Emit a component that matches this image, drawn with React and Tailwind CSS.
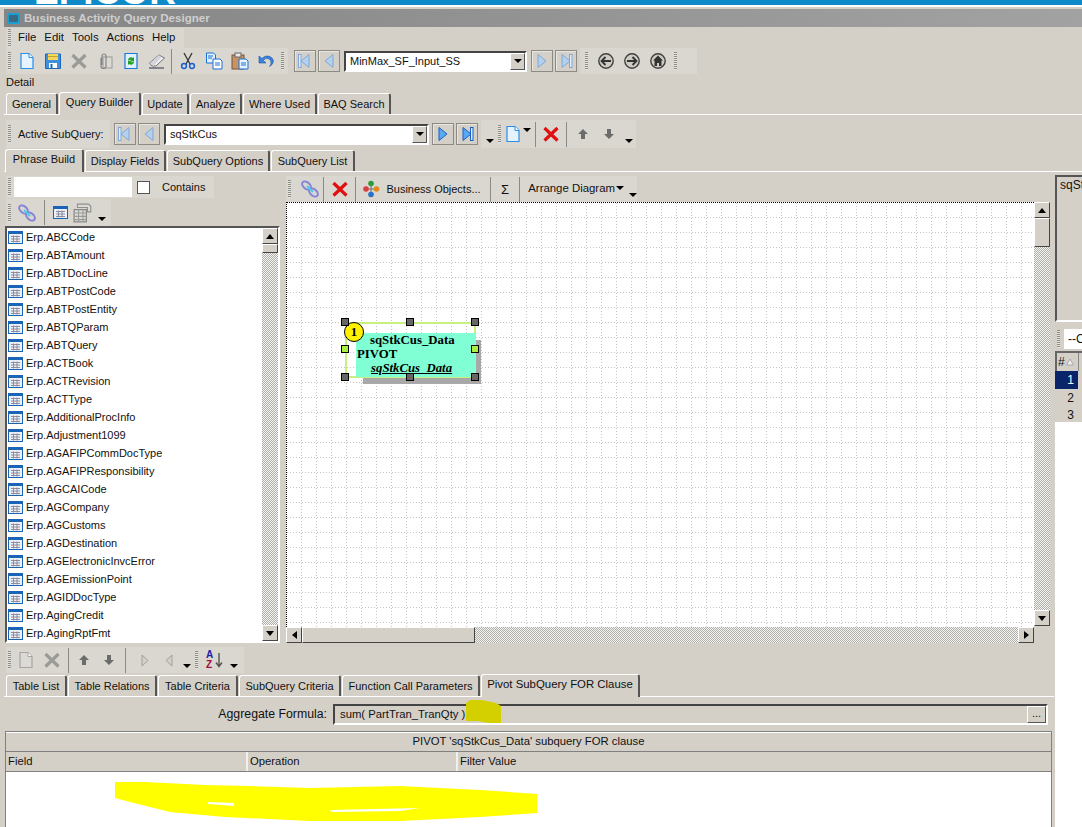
import React from "react";

const tables = ["ABCCode","ABTAmount","ABTDocLine","ABTPostCode","ABTPostEntity","ABTQParam","ABTQuery","ACTBook","ACTRevision","ACTType","AdditionalProcInfo","Adjustment1099","AGAFIPCommDocType","AGAFIPResponsibility","AGCAICode","AGCompany","AGCustoms","AGDestination","AGElectronicInvcError","AGEmissionPoint","AGIDDocType","AgingCredit","AgingRptFmt"];

const Svg = ({ children, size = 18 }) => (
  <svg width={size} height={size} viewBox="0 0 18 18" className="shrink-0">{children}</svg>
);

const DocIcon = ({ gray }) => (
  <Svg>
    <path d="M3 1.500h8l4 4v11H3z" fill={gray ? "#dcdad4" : "#e4f3ff"} stroke={gray ? "#a5a5a5" : "#2b8fe8"} strokeWidth="1.200" />
    <path d="M11 1.500v4h4" fill="#fff" stroke={gray ? "#a5a5a5" : "#2b8fe8"} />
  </Svg>
);
const SaveIcon = () => (
  <Svg>
    <path d="M1.500 2h15v14.500h-15z" fill="#3f8fdc" stroke="#1c66b8" />
    <rect x="4" y="2" width="10" height="6" fill="#f5d75a" />
    <rect x="4" y="4" width="10" height="1" fill="#c8a02c" />
    <rect x="5" y="11" width="8" height="5" fill="#fff" />
    <rect x="6.500" y="12" width="2" height="4" fill="#1c66b8" />
  </Svg>
);
const RedX = ({ gray }) => (
  <Svg>
    <path d="M2.500 3 15.500 15.500M15.500 3 2.500 15.500" stroke={gray ? "#9a9a96" : "#e01010"} strokeWidth="3.200" />
  </Svg>
);
const ClipIcon = () => (
  <Svg>
    <rect x="7" y="5" width="9" height="11" fill="#dcdad4" stroke="#9a9a9a" />
    <path d="M5 6v8a2.500 2.500 0 0 0 5 0V4a2 2 0 0 0-4 0v9" fill="none" stroke="#858585" strokeWidth="1.200" />
  </Svg>
);
const RefreshIcon = () => (
  <Svg>
    <path d="M3 1.500h12v15H3z" fill="#dff1ff" stroke="#1a7ad8" strokeWidth="1.200" />
    <path d="M6 8a3 3 0 0 1 5-2l1-1v4H8l1-1a1.500 1.500 0 0 0-2 1zM12 10a3 3 0 0 1-5 2l-1 1V9h4l-1 1a1.500 1.500 0 0 0 2-1z" fill="#25a025" />
  </Svg>
);
const EraserIcon = () => (
  <Svg>
    <path d="M1.500 11 11 3l5.500 3-8.500 8H4z" fill="#eeeeee" stroke="#70707c" />
    <path d="M2 11l3 3 8-8-2-3z" fill="#d4d4da" />
    <path d="M1 16h15" stroke="#303048" />
  </Svg>
);
const ScissorsIcon = () => (
  <Svg>
    <path d="M5 1l6 11M13 1 7 12" stroke="#333" strokeWidth="1.300" />
    <circle cx="5" cy="14" r="2.400" fill="none" stroke="#1a5fd0" strokeWidth="1.500" />
    <circle cx="13" cy="14" r="2.400" fill="none" stroke="#1a5fd0" strokeWidth="1.500" />
  </Svg>
);
const CopyIcon = () => (
  <Svg>
    <path d="M1.500 1h7l2 2v8h-9z" fill="#dff1ff" stroke="#1a6fd0" />
    <path d="M8 7h7l2 2v8H8z" fill="#fff" stroke="#1a6fd0" />
    <path d="M3 4h5M3 6h4M10 11h5M10 13h5" stroke="#1a6fd0" />
  </Svg>
);
const PasteIcon = () => (
  <Svg>
    <rect x="1" y="3" width="12" height="14" fill="#c79468" stroke="#7c5330" />
    <rect x="4" y="1" width="6" height="4" fill="#e8e8e8" stroke="#666" />
    <path d="M8 7h7l2 2v8H8z" fill="#e4f3ff" stroke="#1a6fd0" />
    <path d="M10 11h5M10 13h5" stroke="#1a6fd0" />
  </Svg>
);
const UndoIcon = () => (
  <Svg>
    <path d="M2 4v7h7L6.500 8.500A4 4 0 0 1 14 10a5 5 0 0 1-1.500 4.500A7 7 0 0 0 16.500 9 6.500 6.500 0 0 0 5 6.500z" fill="#3c82dc" stroke="#1c56a8" strokeWidth=".6" />
  </Svg>
);
const NavIcon = ({ dir, bar, on }) => {
  const stroke = on ? "#1a60c0" : "#7fa8d8";
  const fill = on ? "#58a8f4" : "#b4d0ec";
  return (
    <svg width="14" height="16" viewBox="0 0 14 16">
      <path d={dir === "l" ? "M11 1.500v13L3 8z" : "M3 1.500v13L11 8z"} fill={fill} stroke={stroke} />
      {bar && <rect x={dir === "l" ? 0.500 : 10.500} y="1.500" width="2.500" height="13" fill="#e0ecf8" stroke={stroke} />}
    </svg>
  );
};
const CircleIcon = ({ kind }) => (
  <Svg>
    <circle cx="9" cy="9" r="7.200" fill="#cfccc4" stroke="#404040" strokeWidth="1.400" />
    {kind === "back" && <path d="M14 9H5M8.500 5 4.500 9l4 4" fill="none" stroke="#333" strokeWidth="1.800" />}
    {kind === "fwd" && <path d="M4 9h9M9.500 5l4 4-4 4" fill="none" stroke="#333" strokeWidth="1.800" />}
    {kind === "home" && <path d="M9 3.500 14 8.500h-1.500V14H10v-3H8v3H5.500V8.500H4z" fill="#333" />}
  </Svg>
);
const LinkIcon = () => (
  <Svg>
    <ellipse cx="5.500" cy="5.500" rx="5" ry="3.200" transform="rotate(40 5.500 5.500)" fill="none" stroke="#8484d8" strokeWidth="2" />
    <ellipse cx="12.500" cy="12.500" rx="5" ry="3.200" transform="rotate(40 12.500 12.500)" fill="none" stroke="#8484d8" strokeWidth="2" />
    <path d="M6 6l6 6" stroke="#50c8e8" strokeWidth="2" />
  </Svg>
);
const TableIcon = ({ size = 15 }) => (
  <svg width={size} height={size} viewBox="0 0 15 15" className="shrink-0">
    <rect x=".5" y="1.500" width="14" height="12" fill="#ecf0f6" stroke="#1a64b8" />
    <rect x="1" y="2" width="13" height="2" fill="#1a64b8" />
    <path d="M3 6.500h9M3 9h9M3 11.500h9M5.500 5.500v7M9 5.500v7" stroke="#8c8c9c" />
  </svg>
);
const TableGray = () => (
  <Svg size={20}>
    <path d="M4 1h10l2 2v5h-3V4H4z" fill="#dcdad4" stroke="#909090" />
    <rect x="1" y="6" width="11" height="11" fill="#dcdad4" stroke="#808080" />
    <path d="M1 9h11M1 12h11M1 15h11M5 6v11M9 6v11" stroke="#9a9a9a" />
  </Svg>
);
const ObjectsIcon = () => (
  <Svg>
    <path d="M3 9h10M8 4v10" stroke="#707070" />
    <circle cx="8" cy="3.500" r="2.800" fill="#2f9a3a" />
    <circle cx="3" cy="9" r="2.800" fill="#d84040" />
    <circle cx="13.500" cy="9" r="2.800" fill="#e08a20" />
    <circle cx="8" cy="14.500" r="2.800" fill="#2a70c8" />
  </Svg>
);
const ArrowV = ({ up }) => (
  <svg width="12" height="12" viewBox="0 0 12 12">
    <path d={up ? "M6 1l5 5H8v5H4V6H1z" : "M6 11l5-5H8V1H4v5H1z"} fill="#6c6c6c" />
  </svg>
);
const SortIcon = () => (
  <span className="relative flex w-[20px] h-[20px]">
    <span className="absolute left-[2px] top-[-1px] text-[10px] font-bold leading-[11px] text-[#1a20a8]">A</span>
    <span className="absolute left-[2px] top-[9px] text-[10px] font-bold leading-[11px] text-[#a01040]">Z</span>
    <span className="absolute left-[11px] top-[3px]"><svg width="8" height="15" viewBox="0 0 8 15"><path d="M4 0v13M1 9.500l3 4 3-4" fill="none" stroke="#555" strokeWidth="1.400" /></svg></span>
  </span>
);
const SmallTri = ({ className = "" }) => (
  <span className={`w-0 h-0 border-x-[4px] border-t-[4px] border-x-transparent border-t-black ${className}`} />
);

const Grip = () => (
  <span className="w-[3px] h-[18px] mx-[2px] shrink-0 bg-[repeating-linear-gradient(to_bottom,#8e8c86_0_1px,#e4e2dc_1px_2px)]" />
);
const Sep = ({ className = "mx-[3px]" }) => <span className={`w-px h-[25px] bg-[#8a8a86] shrink-0 ${className}`} />;
const Btn = ({ w = "w-[26px]", children }) => (
  <span className={`${w} h-[24px] flex items-center justify-center shrink-0`}>{children}</span>
);
const NavBtn = ({ children, w = "w-[22px]" }) => (
  <span className={`${w} h-[22px] flex items-center justify-center shrink-0 border border-[#8c8a84] bg-[#d4d0c8] shadow-[inset_1px_1px_0_#e8e6e0]`}>{children}</span>
);
const Combo = ({ w, value }) => (
  <span className={`${w} h-[21px] flex items-center justify-between bg-white border-2 border-t-[#444] border-l-[#444] border-r-white border-b-white shrink-0`}>
    <span className="pl-[4px]">{value}</span>
    <span className="w-[15px] h-[17px] flex items-center justify-center bg-[#d4d0c8] border border-[#555] border-t-white border-l-white"><SmallTri /></span>
  </span>
);
const Tab = ({ w, active, children }) => (
  <span className={active
    ? `${w} h-[23px] -mb-px z-10 flex items-start justify-center pt-[4px] whitespace-nowrap bg-[#d4d0c8] border-l border-t border-white border-r-2 border-r-[#555] rounded-t-[3px] shrink-0`
    : `${w} h-[21px] flex items-center justify-center whitespace-nowrap bg-[#d4d0c8] border-l border-t border-white border-r-2 border-r-[#555] rounded-t-[3px] shrink-0`}>
    {children}
  </span>
);
const TabRow = ({ className = "", children }) => (
  <div className={`flex items-end gap-[1px] border-b border-white ${className}`}>{children}</div>
);

const ScrollBtn = ({ children, className = "" }) => (
  <span className={`flex items-center justify-center shrink-0 bg-[#d4d0c8] border border-t-white border-l-white border-r-[#444] border-b-[#444] ${className}`}>{children}</span>
);
const triUp = "w-0 h-0 border-x-[4px] border-b-[5px] border-x-transparent border-b-black";
const triDown = "w-0 h-0 border-x-[4px] border-t-[5px] border-x-transparent border-t-black";
const track = "bg-[repeating-conic-gradient(#b0aea8_0_25%,#f4f4f2_0_50%)] bg-[length:2px_2px]";

const VScroll = ({ thumb }) => (
  <div className={`w-[16px] flex flex-col shrink-0 ${track}`}>
    <ScrollBtn className="h-[16px]"><span className={triUp} /></ScrollBtn>
    <ScrollBtn className={thumb} />
    <div className="flex-1" />
    <ScrollBtn className="h-[16px]"><span className={triDown} /></ScrollBtn>
  </div>
);

const Handle = ({ pos, green }) => (
  <span className={`absolute w-[8px] h-[8px] border border-black ${green ? "bg-[#a8f040]" : "bg-[#666]"} ${pos}`} />
);

function Canvas() {
  return (
    <div className="relative flex-1 bg-white overflow-hidden border-t border-l border-dotted border-black">
      <svg className="absolute inset-0 w-full h-full">
        <defs>
          <pattern id="grid" width="15" height="15" patternUnits="userSpaceOnUse" x="0" y="0">
            <path d="M14.500 0v15M0 14.500h15" stroke="#c4c4c4" strokeDasharray="1 2" fill="none" />
          </pattern>
        </defs>
        <rect width="100%" height="100%" fill="url(#grid)" />
      </svg>
      {/* query node */}
      <div className="absolute left-[58px] top-[119px] w-[131px] h-[56px] font-['Liberation_Serif',serif] text-[12.800px] font-bold leading-[14px] text-black">
        <div className="absolute left-[18px] top-[18px] w-[118px] h-[44px] bg-[#a8a8a8]" />
        <div className="absolute inset-0 border-2 border-[#c8f080]" />
        <div className="absolute left-[11px] top-[11px] w-[119px] h-[44px] bg-[#80ffd4]" />
        <div className="absolute left-[25px] top-[11px] whitespace-nowrap">sqStkCus_Data</div>
        <div className="absolute left-[12px] top-[25px]">PIVOT</div>
        <div className="absolute left-[26px] top-[39px] italic underline whitespace-nowrap">sqStkCus_Data</div>
        <span className="absolute left-[-1px] top-[0px] w-[20px] h-[20px] rounded-full bg-[#fff200] border border-black flex items-center justify-center">1</span>
        <Handle pos="left-[-4px] top-[-4px]" />
        <Handle pos="left-[61px] top-[-4px]" />
        <Handle pos="left-[126px] top-[-4px]" />
        <Handle pos="left-[-4px] top-[23px]" green />
        <Handle pos="left-[126px] top-[23px]" green />
        <Handle pos="left-[-4px] top-[51px]" />
        <Handle pos="left-[61px] top-[51px]" />
        <Handle pos="left-[126px] top-[51px]" />
      </div>
    </div>
  );
}

export default function App() {
  return (
    <div className="relative w-[1082px] h-[827px] overflow-hidden flex flex-col bg-[#d4d0c8] font-['Liberation_Sans',sans-serif] text-[11px] leading-none text-[#111]">
      {/* desktop banner */}
      <div className="relative h-[5px] shrink-0 overflow-hidden bg-[#0e8ac8]">
        <span className="absolute left-[34px] bottom-[-5px] text-[37px] leading-[37px] font-bold text-white">EPICOR</span>
      </div>
      <div className="h-[2px] shrink-0 bg-white" />

      <div className="flex-1 flex flex-col pt-[2px] pl-[4px] bg-[#d4d0c8] min-h-0">
        {/* title bar */}
        <div className="h-[18px] shrink-0 flex items-center gap-[4px] pl-[3px] bg-[linear-gradient(to_right,#858585,#a2a2a2)]">
          <span className="w-[13px] h-[11px] rounded-[3px] border-2 border-[#16a0d8] bg-[#3a6a80]" />
          <span className="font-bold text-[#cfcfcf] text-[11.600px]">Business Activity Query Designer</span>
        </div>

        {/* menu */}
        <div className="h-[20px] mt-px w-[178px] shrink-0 flex items-center bg-[#dad7d0] ml-[2px] text-[11.400px]">
          <Grip />
          <span className="ml-[5px]">File</span>
          <span className="ml-[8px]">Edit</span>
          <span className="ml-[8px]">Tools</span>
          <span className="ml-[8px]">Actions</span>
          <span className="ml-[8px]">Help</span>
        </div>

        {/* main toolbar */}
        <div className="h-[26px] shrink-0 flex items-center ml-[2px]">
          <div className="h-[26px] flex items-center bg-[#dad7d0] pr-[2px]">
            <Grip />
            <span className="w-[1px]" />
            <Btn><DocIcon /></Btn>
            <Btn><SaveIcon /></Btn>
            <Btn><RedX gray /></Btn>
            <Btn><ClipIcon /></Btn>
            <Btn><RefreshIcon /></Btn>
            <Btn><EraserIcon /></Btn>
            <Sep className="ml-[1px] mr-[3px]" />
            <Btn><ScissorsIcon /></Btn>
            <Btn><CopyIcon /></Btn>
            <Btn><PasteIcon /></Btn>
            <Btn><UndoIcon /></Btn>
            <Grip />
          </div>
          <div className="flex items-center gap-[2px] ml-[6px]">
            <NavBtn><NavIcon dir="l" bar /></NavBtn>
            <NavBtn><NavIcon dir="l" /></NavBtn>
          </div>
          <span className="w-[4px]" />
          <Combo w="w-[183px]" value="MinMax_SF_Input_SS" />
          <div className="flex items-center gap-[2px] ml-[4px]">
            <NavBtn><NavIcon dir="r" /></NavBtn>
            <NavBtn><NavIcon dir="r" bar /></NavBtn>
          </div>
          <div className="h-[26px] flex items-center bg-[#dad7d0] ml-[3px] w-[117px] pl-[3px]">
            <Grip />
            <span className="w-[3px]" />
            <Btn><CircleIcon kind="back" /></Btn>
            <Btn><CircleIcon kind="fwd" /></Btn>
            <Btn><CircleIcon kind="home" /></Btn>
            <span className="w-[1px]" />
            <Grip />
          </div>
        </div>

        <div className="h-[17px] shrink-0 flex items-center pl-[2px]">Detail</div>

        {/* top tabs */}
        <TabRow className="h-[24px] shrink-0 pl-[2px]">
          <Tab w="w-[52px]">General</Tab>
          <Tab w="w-[82px]" active>Query Builder</Tab>
          <Tab w="w-[47px]">Update</Tab>
          <Tab w="w-[52px]">Analyze</Tab>
          <Tab w="w-[74px]">Where Used</Tab>
          <Tab w="w-[73px]">BAQ Search</Tab>
        </TabRow>

        {/* active subquery */}
        <div className="h-[28px] mt-[5px] shrink-0 flex items-center ml-[2px]">
          <div className="h-[28px] w-[104px] flex items-center bg-[#dad7d0]">
            <Grip />
            <span className="ml-[5px] whitespace-nowrap">Active SubQuery:</span>
          </div>
          <div className="flex items-center gap-[2px] ml-[4px]">
            <NavBtn><NavIcon dir="l" bar /></NavBtn>
            <NavBtn><NavIcon dir="l" /></NavBtn>
          </div>
          <span className="w-[4px]" />
          <Combo w="w-[265px]" value="sqStkCus" />
          <div className="flex items-center gap-[2px] ml-[3px]">
            <NavBtn><NavIcon dir="r" on /></NavBtn>
            <NavBtn><NavIcon dir="r" bar on /></NavBtn>
          </div>
          <div className="h-[28px] ml-[3px] flex items-center bg-[#dad7d0] w-[155px] pl-[5px]">
            <SmallTri className="self-end mb-[5px]" />
            <span className="w-[2px]" />
            <Grip />
            <Btn w="w-[20px]"><DocIcon /></Btn>
            <SmallTri className="mb-[8px]" />
            <span className="w-[1px]" />
            <Sep />
            <Btn w="w-[24px]"><RedX /></Btn>
            <Sep />
            <Btn w="w-[25px]"><ArrowV up /></Btn>
            <Btn w="w-[27px]"><ArrowV /></Btn>
            <SmallTri className="self-end mb-[5px] ml-[3px]" />
          </div>
        </div>

        {/* sub tabs */}
        <TabRow className="h-[24px] shrink-0 pl-[1px]">
          <Tab w="w-[79px]" active>Phrase Build</Tab>
          <Tab w="w-[81px]">Display Fields</Tab>
          <Tab w="w-[103px]">SubQuery Options</Tab>
          <Tab w="w-[84px]">SubQuery List</Tab>
        </TabRow>

        <div className="flex-1 flex min-h-0">
          <div className="w-[1050px] flex flex-col shrink-0">
            {/* phrase build workspace */}
            <div className="h-[471px] flex shrink-0 pt-[4px]">
              {/* left column */}
              <div className="w-[276px] flex flex-col shrink-0">
                <div className="h-[22px] w-[208px] ml-[2px] flex items-center bg-[#dad7d0]">
                  <Grip />
                  <span className="w-[118px] h-[20px] bg-white ml-[1px]" />
                  <span className="w-[13px] h-[13px] ml-[5px] bg-white border border-[#555]" />
                  <span className="ml-[12px]">Contains</span>
                </div>
                <div className="h-[27px] w-[105px] ml-[2px] mt-[1px] flex items-center bg-[#dad7d0]">
                  <Grip />
                  <span className="w-[4px]" />
                  <Btn w="w-[20px]"><LinkIcon /></Btn>
                  <span className="w-[4px]" />
                  <Sep />
                  <Btn w="w-[24px]"><TableIcon size={15} /></Btn>
                  <Btn w="w-[22px]"><TableGray /></Btn>
                  <SmallTri className="self-end mb-[5px] ml-[4px]" />
                </div>
                <div className="flex-1 flex min-h-0 ml-px bg-white border-2 border-t-[#555] border-l-[#555] border-r-white border-b-white">
                  <ul className="flex-1 overflow-hidden">
                    {tables.map((t) => (
                      <li key={t} className="h-[18px] flex items-center pl-[1px] gap-[3px] whitespace-nowrap">
                        <TableIcon size={15} />
                        <span>Erp.{t}</span>
                      </li>
                    ))}
                  </ul>
                  <VScroll thumb="h-[9px]" />
                </div>
              </div>

              {/* canvas */}
              <div className="w-[764px] ml-[6px] flex flex-col shrink-0">
                <div className="h-[26px] w-[351px] flex items-center bg-[#dad7d0]">
                  <Grip />
                  <span className="w-[8px]" />
                  <Btn w="w-[20px]"><LinkIcon /></Btn>
                  <Sep />
                  <Btn w="w-[25px]"><RedX /></Btn>
                  <Sep className="ml-[3px] mr-[5px]" />
                  <Btn w="w-[22px]"><ObjectsIcon /></Btn>
                  <span className="ml-[3px] w-[108px] whitespace-nowrap">Business Objects...</span>
                  <Sep />
                  <span className="w-[24px] text-center text-[13px]">Σ</span>
                  <Sep />
                  <span className="ml-[5px] whitespace-nowrap text-[11.400px]">Arrange Diagram</span>
                  <SmallTri className="ml-[1px] mb-[3px]" />
                  <SmallTri className="ml-[5px] self-end mb-[5px]" />
                </div>
                <div className="flex-1 flex min-h-0">
                  <div className="flex-1 flex flex-col min-w-0">
                    <Canvas />
                    <div className={`h-[16px] flex shrink-0 ${track}`}>
                      <ScrollBtn className="w-[16px]"><span className="w-0 h-0 border-y-[4px] border-r-[5px] border-y-transparent border-r-black" /></ScrollBtn>
                      <ScrollBtn className="w-[173px]" />
                      <div className="flex-1" />
                      <ScrollBtn className="w-[16px]"><span className="w-0 h-0 border-y-[4px] border-l-[5px] border-y-transparent border-l-black" /></ScrollBtn>
                    </div>
                  </div>
                  <div className="flex h-[424px]"><VScroll thumb="h-[29px]" /></div>
                </div>
              </div>
            </div>

            {/* bottom toolbar */}
            <div className="h-[27px] mt-[4px] ml-[2px] shrink-0 flex items-start">
              <div className="h-[26px] w-[238px] flex items-center bg-[#dad7d0]">
                <Grip />
                <Btn><DocIcon gray /></Btn>
                <Btn><RedX gray /></Btn>
                <Sep />
                <Btn w="w-[24px]"><ArrowV up /></Btn>
                <Btn w="w-[26px]"><ArrowV /></Btn>
                <Sep className="ml-[3px] mr-[7px]" />
                <Btn w="w-[24px]"><svg width="10" height="13" viewBox="0 0 10 13"><path d="M2 1v11l6-5.500z" fill="#d4d0c8" stroke="#a0a0a0" /></svg></Btn>
                <Btn w="w-[23px]"><svg width="10" height="13" viewBox="0 0 10 13"><path d="M8 1v11L2 6.500z" fill="#d4d0c8" stroke="#a0a0a0" /></svg></Btn>
                <SmallTri className="self-end mb-[5px] ml-[3px]" />
                <span className="w-[2px]" />
                <Grip />
                <span className="w-[4px]" />
                <SortIcon />
                <SmallTri className="self-end mb-[5px] ml-[6px]" />
              </div>
            </div>

            {/* bottom tabs */}
            <TabRow className="h-[23px] shrink-0 pl-[2px]">
              <Tab w="w-[61px]">Table List</Tab>
              <Tab w="w-[89px]">Table Relations</Tab>
              <Tab w="w-[80px]">Table Criteria</Tab>
              <Tab w="w-[102px]">SubQuery Criteria</Tab>
              <Tab w="w-[138px]">Function Call Parameters</Tab>
              <Tab w="w-[159px]" active><span className="text-[11.400px]">Pivot SubQuery FOR Clause</span></Tab>
            </TabRow>

            {/* aggregate formula */}
            <div className="h-[21px] mt-[7px] shrink-0 flex items-center">
              <span className="w-[323px] text-right whitespace-nowrap text-[12.300px]">Aggregate Formula:</span>
              <div className="w-[715px] ml-[6px] h-[21px] flex items-center justify-between border-2 border-t-[#444] border-l-[#444] border-r-white border-b-white">
                <span className="pl-[5px] text-[11.300px]">sum( PartTran_TranQty )</span>
                <span className="w-[19px] h-[17px] flex items-center justify-center border border-t-white border-l-white border-r-[#555] border-b-[#555] pb-[2px]">...</span>
              </div>
            </div>

            {/* pivot grid */}
            <div className="flex-1 mt-[6px] ml-px mr-[2px] flex flex-col border border-[#808080] border-b-0 min-h-0 text-[11.300px]">
              <div className="h-[20px] shrink-0 flex items-center justify-center border-t border-white border-b border-b-[#808080]">PIVOT 'sqStkCus_Data' subquery FOR clause</div>
              <div className="h-[20px] shrink-0 flex border-b border-[#808080]">
                <span className="w-[242px] pl-[2px] flex items-center border-r-2 border-r-[#f0f0f0]">Field</span>
                <span className="w-[210px] pl-[2px] flex items-center border-r-2 border-r-[#f0f0f0]">Operation</span>
                <span className="flex-1 pl-[2px] flex items-center">Filter Value</span>
              </div>
              <div className="flex-1 bg-white" />
            </div>
          </div>

          {/* right dock */}
          <div className="flex-1 flex flex-col pl-[1px]">
            <div className="h-[147px] mt-[3px] border-t-2 border-l-2 border-[#555] border-b-2 border-b-white pt-[2px] pl-[3px] overflow-hidden whitespace-nowrap text-[12px]">sqStkCus</div>
            <div className="h-[24px] mt-[5px] flex items-center">
              <Grip />
              <span className="flex-1 h-[20px] bg-white ml-[2px] pl-[4px] flex items-center text-[12px]">--Cho</span>
            </div>
            <div className="h-[20px] flex items-center border-t-2 border-l-2 border-[#666] overflow-hidden text-[12px]">
              <span className="w-[22px] pl-[1px] flex items-center gap-[1px] border-r border-[#888] h-full shrink-0">
                #<svg width="8" height="8" viewBox="0 0 8 8"><path d="M4 1l3.500 6H.5z" fill="#eee" stroke="#aaa" /></svg>
              </span>
            </div>
            <div className="h-[18px] flex justify-end items-center pr-[4px] w-[23px] bg-[#0a246a] text-white text-[12px]">1</div>
            <div className="h-[18px] flex justify-end items-center pr-[4px] w-[23px] text-[12px]">2</div>
            <div className="h-[15px] flex justify-end items-center pr-[4px] w-[23px] text-[12px]">3</div>
            <div className="absolute left-[1055px] top-[422px] right-0 bottom-0 bg-white" />
          </div>
        </div>
      </div>

      {/* marker highlights */}
      <svg className="absolute left-0 top-0 pointer-events-none" width="1082" height="827">
        <path d="M466 703 470 700 482 700 496 703 501 706 501 723 488 723 478 721 466 721z" fill="#d4d000" />
        <path fillRule="evenodd" d="M115 782 145 782 205 785 250 786 310 788 400 786 480 790 537 794 537 813 480 817 400 821 310 821 225 817 170 812 130 802 115 798zM208 802 234 803 234 806 208 804zM330 810 420 808 400 811 332 812z" fill="#ffff00" />
      </svg>
    </div>
  );
}
